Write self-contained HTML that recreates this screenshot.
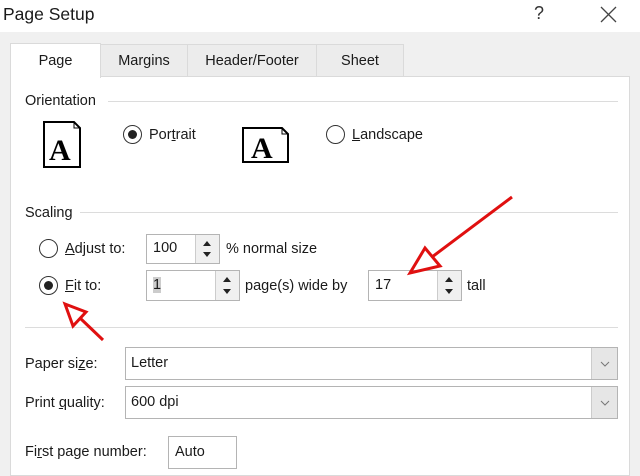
<!DOCTYPE html><html><head><style>
body{margin:0;width:640px;height:469px;overflow:hidden;background:#f0f0f0;font-family:"Liberation Sans",sans-serif;font-size:14.5px;color:#1a1a1a;position:relative}
.a{position:absolute;white-space:nowrap}
.tab{position:absolute;top:44px;height:32px;background:#ececec;border:1px solid #dadada;border-bottom:none;box-sizing:border-box;text-align:center;line-height:33px}
.line{position:absolute;height:1px;background:#dcdcdc}
.inp{position:absolute;background:#fff;border:1px solid #b4b4b4;box-sizing:border-box;padding-left:6px;line-height:26px}
.spin{position:absolute;top:0;bottom:0;right:0;width:23px;background:#f0f0f0;border-left:1px solid #ccc}
.spin:before{content:"";position:absolute;left:7px;top:6px;border:4px solid transparent;border-bottom:5px solid #222;border-top:none}
.spin:after{content:"";position:absolute;left:7px;bottom:6px;border:4px solid transparent;border-top:5px solid #222;border-bottom:none}
.rad{position:absolute;width:19px;height:19px;border:1px solid #333;border-radius:50%;box-sizing:border-box;background:#fff}
.rad.on:after{content:"";position:absolute;left:4px;top:4px;width:9px;height:9px;border-radius:50%;background:#222}
.sel{position:absolute;left:125px;width:493px;height:33px;background:#fff;border:1px solid #b4b4b4;box-sizing:border-box;padding-left:5px;line-height:31px}
.dd{position:absolute;right:0;top:0;bottom:0;width:25px;background:#e6e6e6;border-left:1px solid #ccc}
u{text-decoration:underline}
</style></head><body>
<div class="a" style="left:0;top:0;width:640px;height:32px;background:#fff"></div>
<div class="a" style="left:3px;top:4px;font-size:17.5px">Page Setup</div>
<div class="a" style="left:534px;top:3px;font-size:18px;color:#333">?</div>
<svg class="a" style="left:600px;top:6px" width="17" height="17"><path d="M1 1L16 16M16 1L1 16" stroke="#444" stroke-width="1.3"/></svg>
<div class="a" style="left:10px;top:76px;width:620px;height:400px;background:#fff;border:1px solid #dadada;box-sizing:border-box"></div>
<div class="tab" style="left:100px;width:88px">Margins</div>
<div class="tab" style="left:187px;width:130px">Header/Footer</div>
<div class="tab" style="left:316px;width:88px">Sheet</div>
<div class="tab" style="left:10px;top:43px;height:35px;width:91px;background:#fff;line-height:35px">Page</div>
<div class="a" style="left:25px;top:93px">Orientation</div><div class="line" style="left:108px;top:101px;width:510px"></div>
<svg class="a" style="left:43px;top:121px" width="40" height="48"><path d="M1 1H31L37 7V46H1Z" fill="#fff" stroke="#000" stroke-width="2"/><path d="M31 1V7H37" fill="none" stroke="#000"/><text x="6" y="39" font-family="Liberation Serif" font-weight="bold" font-size="30">A</text></svg>
<div class="rad on" style="left:123px;top:125px"></div><div class="a" style="left:149px;top:127px">Por<u>t</u>rait</div>
<svg class="a" style="left:242px;top:127px" width="48" height="37"><path d="M1 1H40L46 7V35H1Z" fill="#fff" stroke="#000" stroke-width="2"/><path d="M40 1V7H46" fill="none" stroke="#000"/><text x="9" y="31" font-family="Liberation Serif" font-weight="bold" font-size="30">A</text></svg>
<div class="rad" style="left:326px;top:125px"></div><div class="a" style="left:352px;top:127px"><u>L</u>andscape</div>
<div class="a" style="left:25px;top:205px">Scaling</div><div class="line" style="left:80px;top:212px;width:538px"></div>
<div class="rad" style="left:39px;top:239px"></div><div class="a" style="left:65px;top:241px"><u>A</u>djust to:</div>
<div class="inp" style="left:146px;top:234px;width:74px;height:30px">100<div class="spin"></div></div>
<div class="a" style="left:226px;top:241px">% normal size</div>
<div class="rad on" style="left:39px;top:276px"></div><div class="a" style="left:65px;top:278px"><u>F</u>it to:</div>
<div class="inp" style="left:146px;top:270px;width:94px;height:31px;line-height:29px"><span style="background:#ccc">1</span><div class="spin"></div></div>
<div class="a" style="left:245px;top:278px">page(s) wide by</div>
<div class="inp" style="left:368px;top:270px;width:94px;height:31px;line-height:29px">17<div class="spin"></div></div>
<div class="a" style="left:467px;top:278px">tall</div>
<div class="line" style="left:25px;top:327px;width:593px"></div>
<div class="a" style="left:25px;top:356px">Paper si<u>z</u>e:</div>
<div class="sel" style="top:347px">Letter<div class="dd"><svg style="position:absolute;left:8px;top:13px" width="10" height="6"><path d="M1 1L5 5L9 1" fill="none" stroke="#777"/></svg></div></div>
<div class="a" style="left:25px;top:395px">Print <u>q</u>uality:</div>
<div class="sel" style="top:386px">600 dpi<div class="dd"><svg style="position:absolute;left:8px;top:13px" width="10" height="6"><path d="M1 1L5 5L9 1" fill="none" stroke="#777"/></svg></div></div>
<div class="a" style="left:25px;top:444px">Fi<u>r</u>st page number:</div>
<div class="inp" style="left:168px;top:436px;width:69px;height:33px;line-height:30px">Auto</div>
<svg class="a" style="left:0;top:0" width="640" height="469"><g fill="none" stroke="#e01010" stroke-width="3" stroke-linejoin="miter">
<path d="M512 197L432 257"/><path d="M410 273L425 248L440 266Z"/>
<path d="M103 340L80 318"/><path d="M65 304L86 312L73 326Z"/></g></svg>
</body></html>
